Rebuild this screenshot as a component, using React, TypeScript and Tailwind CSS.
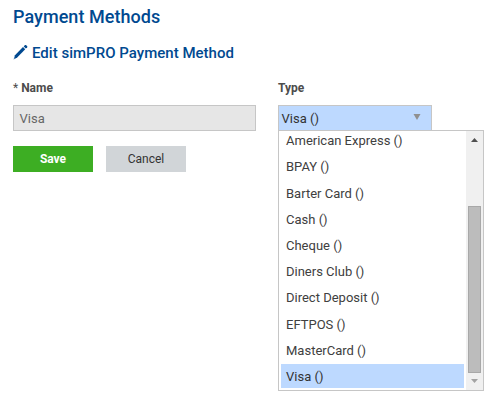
const options = [
  'American Express ()',
  'BPAY ()',
  'Barter Card ()',
  'Cash ()',
  'Cheque ()',
  'Diners Club ()',
  'Direct Deposit ()',
  'EFTPOS ()',
  'MasterCard ()',
  'Visa ()',
];

function PencilIcon() {
  return (
    <svg width="15" height="16" viewBox="0 0 15 16" fill="#004990" className="-mt-[2px] shrink-0">
      <path d="M0.6 15.4 2 11.3 10 3.1 12.2 5.3 4.2 13.5Z" />
      <path d="M10.7 2.4 12 1.1Q12.5 0.7 13 1.1L14.2 2.2Q14.6 2.7 14.2 3.2L12.9 4.6Z" />
      <path d="M1.5 13.2 2.8 14.5 1.4 15Z" fill="#8fb0d0" />
    </svg>
  );
}

function TypeList() {
  return (
    <div className="-mt-px flex h-[261px] w-[206px] border border-[#c6c6c6] bg-white">
      <div className="flex min-w-0 flex-1 flex-col justify-end gap-[2px] overflow-hidden px-[2px] pb-[1.875px]">
        {options.map((name) => (
          <div
            key={name}
            className={`h-[24.2px] shrink-0 pl-[5px] leading-[25px] ${name === 'Visa ()' ? 'bg-[#bdd9ff] text-[#333]' : ''}`}
          >
            {name}
          </div>
        ))}
      </div>
      <div className="flex w-[17px] flex-col items-center bg-[#f0f0f0]">
        <svg width="17" height="75" className="shrink-0">
          <path d="M5 11h7L8.5 7Z" fill="#505050" />
        </svg>
        <div className="h-[167px] w-[13px] border border-[#a8a8a8] bg-[#bcbcbc]" />
        <svg width="17" height="17" className="shrink-0">
          <path d="M5 6h7L8.5 10Z" fill="#a3a3a3" />
        </svg>
      </div>
    </div>
  );
}

export default function App() {
  return (
    <div className="h-[405px] w-[495px] overflow-hidden bg-white pl-[13px] font-['Roboto',sans-serif] text-[13px] text-[#404040]">
      <h1 className="pt-[5px] text-[18px] leading-[24px] font-medium tracking-[0.05px] text-[#004990]">Payment Methods</h1>
      <h2 className="mt-[14px] flex h-5 items-center gap-1 text-[15px] leading-5 font-medium tracking-[0.02px] text-[#004990]">
        <PencilIcon />
        <span>Edit simPRO Payment Method</span>
      </h2>
      <div className="mt-[17px] flex gap-[22px]">
        <div className="w-[243px]">
          <div className="h-[25px] text-[12px] leading-4 font-bold text-[#4c4c4c]">
            <span className="font-normal">*</span> Name
          </div>
          <div className="h-[26px] border border-[#c6c6c6] bg-[#e6e6e6] pl-[5.6px] leading-[25px] text-[#666]">Visa</div>
          <div className="mt-[15px] flex gap-[13px] text-[12px]">
            <button className="h-[26px] w-20 bg-[#3dae23] font-bold text-white">Save</button>
            <button className="h-[26px] w-20 bg-[#d1d5d8] text-[#333]">Cancel</button>
          </div>
        </div>
        <div>
          <div className="h-[25px] text-[12px] leading-4 font-bold text-[#4c4c4c]">Type</div>
          <div className="flex h-[26px] w-[154px] justify-between border border-[#c6c6c6] bg-[#bdd9ff] pr-[10px] pl-[2.6px] leading-[25px] text-[#333]">
            <span>Visa ()</span>
            <svg width="8" height="24">
              <path d="M0.5 8h7L4 14Z" fill="#909090" />
            </svg>
          </div>
          <TypeList />
        </div>
      </div>
    </div>
  );
}
